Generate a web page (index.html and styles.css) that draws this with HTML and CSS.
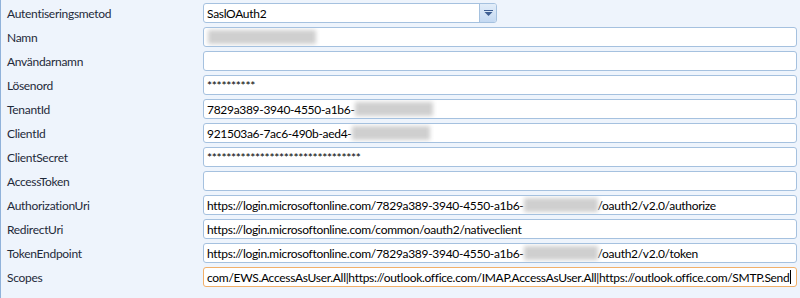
FILE: index.html
```html
<!DOCTYPE html>
<html lang="sv">
<head>
  <meta charset="UTF-8">
  <title>Kontoinställningar</title>
  <link rel="stylesheet" href="styles.css">
</head>
<body>
  <form class="settings">
    <label class="label">Autentiseringsmetod</label>
    <div class="combo">
      <span class="combo-text">SaslOAuth2</span>
      <span class="combo-btn">
        <svg width="9" height="6" viewBox="0 0 9 6">
          <rect x="0" y="0" width="9" height="1" fill="#3e5e92"/>
          <polygon points="0.5,2 8.5,2 4.5,6" fill="#3e5e92"/>
        </svg>
      </span>
    </div>

    <label class="label">Namn</label>
    <div class="field"><span class="blur blur-name"></span></div>

    <label class="label">Användarnamn</label>
    <div class="field"></div>

    <label class="label">Lösenord</label>
    <div class="field">**********</div>

    <label class="label">TenantId</label>
    <div class="field">7829a389-3940-4550-a1b6-<span class="blur blur-id"></span></div>

    <label class="label">ClientId</label>
    <div class="field">921503a6-7ac6-490b-aed4-<span class="blur blur-id"></span></div>

    <label class="label">ClientSecret</label>
    <div class="field">********************************</div>

    <label class="label">AccessToken</label>
    <div class="field"></div>

    <label class="label">AuthorizationUri</label>
    <div class="field">https://login.microsoftonline.com/7829a389-3940-4550-a1b6-<span class="blur blur-uri"></span>/oauth2/v2.0/authorize</div>

    <label class="label">RedirectUri</label>
    <div class="field">https://login.microsoftonline.com/common/oauth2/nativeclient</div>

    <label class="label">TokenEndpoint</label>
    <div class="field">https://login.microsoftonline.com/7829a389-3940-4550-a1b6-<span class="blur blur-uri"></span>/oauth2/v2.0/token</div>

    <label class="label">Scopes</label>
    <!-- scrolled to the end, only the visible tail is shown -->
    <div class="field field-focus"><span class="scroll-text">com/EWS.AccessAsUser.All|https://outlook.office.com/IMAP.AccessAsUser.All|https://outlook.office.com/SMTP.Send</span><span class="caret"></span></div>
  </form>
</body>
</html>
```

FILE: styles.css
```css
body {
  margin: 0;
  background-color: #eef4fc;
  font-family: Lato, "Open Sans", sans-serif;
  font-size: 12px;
  color: #1e1e1e;
}
.settings {
  display: grid;
  grid-template-columns: 196px 1fr;
  grid-auto-rows: 20px;
  row-gap: 4px;
  height: 298px;
  box-sizing: border-box;
  padding: 3px 3px 0 6px;
  border-left: 1px solid #90b2da;
}
.label {
  display: flex;
  align-items: center;
  color: #1e2a3a;
  letter-spacing: -0.3px;
}
.field, .combo {
  display: flex;
  align-items: center;
  box-sizing: border-box;
  height: 20px;
  background: #fff;
  border: 1px solid #a5c1df;
  border-radius: 3px;
  padding: 0 3px;
  white-space: nowrap;
  overflow: hidden;
  color: #000;
  letter-spacing: -0.3px;
}
.combo {
  width: 294px;
  padding-right: 0;
}
.combo-text {
  flex: 1;
}
.combo-btn {
  display: flex;
  align-items: center;
  justify-content: center;
  width: 16px;
  height: 18px;
  border-left: 1px solid #a5c1df;
  background: linear-gradient(#e2edf9, #c4d9f2);
}
.blur {
  display: inline-block;
  height: 14px;
  background: #cfcfcf;
  filter: blur(2px);
}
.blur-name {
  width: 108px;
  margin-left: 1px;
}
.blur-id {
  width: 78px;
}
.blur-uri {
  width: 74px;
}
.field-focus {
  border-color: #f1b06a;
  justify-content: space-between;
  padding-right: 5px;
}
.scroll-text {
  flex-shrink: 0;
}
.caret {
  flex-shrink: 0;
  width: 1px;
  height: 14px;
  background: #000;
}
```
